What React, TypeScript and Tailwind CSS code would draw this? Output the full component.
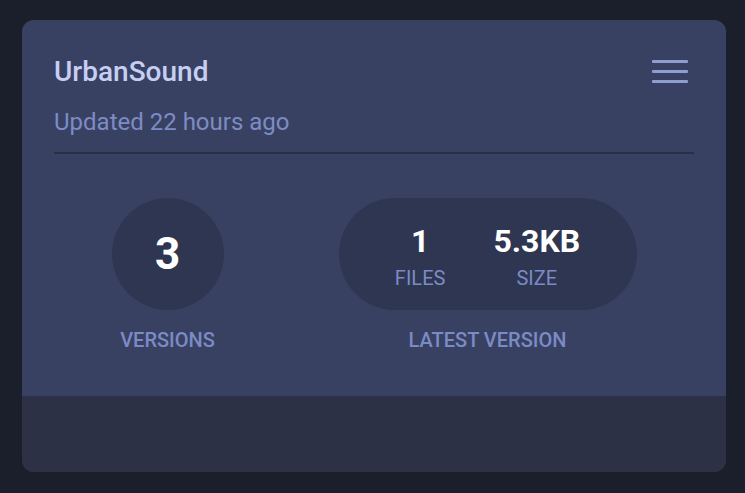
import React from "react";

export default function App() {
  return (
    <div className="w-[745px] h-[493px] bg-[#1b1e2b] pt-[20px] pl-[22px]" style={{ fontFamily: "Roboto, 'Noto Sans', sans-serif" }}>
      <div className="w-[704px] h-[452px] rounded-[12px] overflow-hidden flex flex-col bg-[#2c3145]">
        <div className="h-[376px] bg-[#394162] px-[32px] pt-[36px]">
          <div className="flex items-start justify-between">
            <div className="text-[28px] leading-[32px] font-medium text-[#c5cff3]">UrbanSound</div>
            <button className="mr-[6px] mt-[4px] flex flex-col gap-[7px] w-[36px]">
              <span className="block h-[3px] w-[36px] bg-[#8f9dd0] rounded-[1px]" />
              <span className="block h-[3px] w-[36px] bg-[#8f9dd0] rounded-[1px]" />
              <span className="block h-[3px] w-[36px] bg-[#8f9dd0] rounded-[1px]" />
            </button>
          </div>
          <div className="mt-[20px] text-[24px] leading-[28px] text-[#7d8cc4]">Updated 22 hours ago</div>
          <div className="mt-[16px] h-[2px] bg-[#2a2f43]" />
          <div className="mt-[44px] flex justify-around">
            <div className="flex flex-col items-center">
              <div className="w-[112px] h-[112px] rounded-full bg-[#2f3651] flex items-center justify-center">
                <span className="text-[44px] leading-[52px] font-bold text-white">3</span>
              </div>
              <div className="mt-[18px] text-[20px] leading-[24px] font-medium text-[#7b8bc6]">VERSIONS</div>
            </div>
            <div className="flex flex-col items-center">
              <div className="w-[298px] h-[112px] rounded-full bg-[#2f3651] flex items-center justify-center gap-[48px] pt-[4px]">
                <div className="flex flex-col items-center">
                  <span className="text-[32px] leading-[36px] font-bold text-white">1</span>
                  <span className="mt-[7px] text-[20px] leading-[24px] text-[#7b8bc6]">FILES</span>
                </div>
                <div className="flex flex-col items-center">
                  <span className="text-[32px] leading-[36px] font-bold text-white">5.3KB</span>
                  <span className="mt-[7px] text-[20px] leading-[24px] text-[#7b8bc6]">SIZE</span>
                </div>
              </div>
              <div className="mt-[18px] text-[20px] leading-[24px] font-medium text-[#7b8bc6]">LATEST VERSION</div>
            </div>
          </div>
        </div>
        <div className="flex-1 bg-[#2c3145]" />
      </div>
    </div>
  );
}
